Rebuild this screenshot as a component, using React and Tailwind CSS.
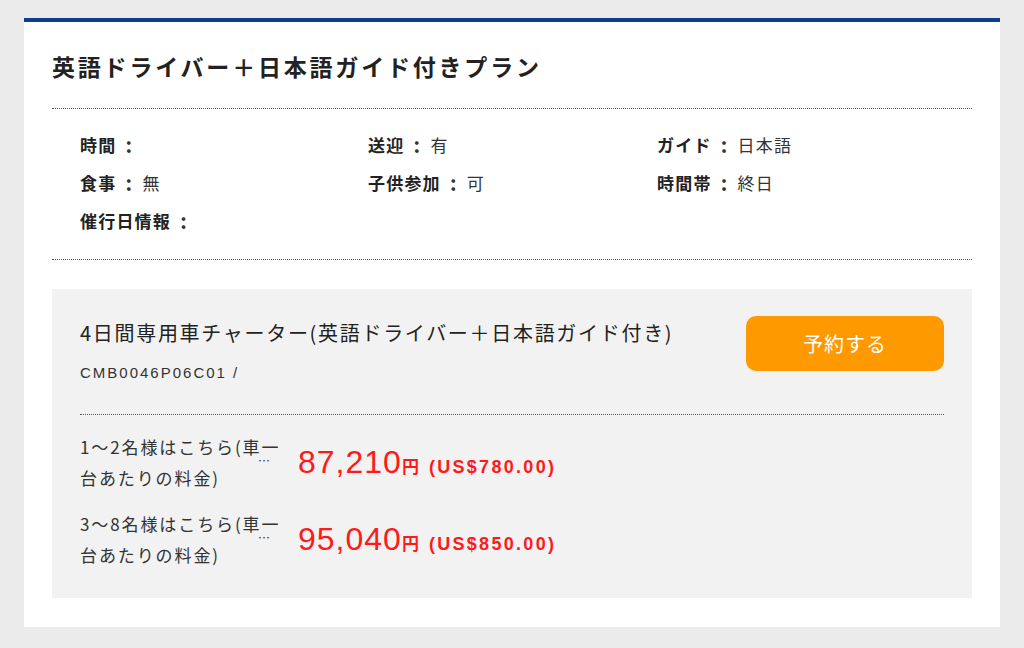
const Colon = () => <span className="inline-block w-[26px] text-center font-bold text-[20px] leading-[38px]">:</span>;

function Item({ label, value }) {
  return (
    <div className="flex items-center">
      <span className="font-bold text-[#222]">{label}</span>
      <Colon />
      {value && <span>{value}</span>}
    </div>
  );
}

export default function App() {
  const rows = [
    { label: "1〜2名様はこちら(車一", label2: "台あたりの料金)", price: "87,210", usd: "(US$780.00)" },
    { label: "3〜8名様はこちら(車一", label2: "台あたりの料金)", price: "95,040", usd: "(US$850.00)" },
  ];
  return (
    <div className="w-[1024px] h-[648px] bg-[#ebebeb] pt-[18px] pl-[24px] font-['Noto_Sans_CJK_JP',sans-serif] text-[#222]">
      <div className="w-[976px] h-[609px] bg-white border-t-[4px] border-[#0c3d8e] px-[28px]">
        <div className="pt-[28px] pb-[26px] border-b border-dotted border-[#555]">
          <h1 className="text-[23px] leading-[32px] font-bold tracking-[2.8px] text-[#222]">英語ドライバー＋日本語ガイド付きプラン</h1>
        </div>
        <div className="pt-[17px] pb-[19px] pl-[28px] border-b border-dotted border-[#555] grid grid-cols-[288px_289px_1fr] text-[17px] leading-[38px] tracking-[1.2px] text-[#333]">
          <Item label="時間" />
          <Item label="送迎" value="有" />
          <Item label="ガイド" value="日本語" />
          <Item label="食事" value="無" />
          <Item label="子供参加" value="可" />
          <Item label="時間帯" value="終日" />
          <Item label="催行日情報" />
        </div>
        <div className="mt-[29px] h-[309px] bg-[#f2f2f2] px-[28px] pt-[27px]">
          <div className="flex justify-between pb-[32px] border-b border-dotted border-[#555]">
            <div className="pt-[3px]">
              <div className="text-[20px] leading-[28px] tracking-[1.7px] text-[#222]">4日間専用車チャーター(英語ドライバー＋日本語ガイド付き)</div>
              <div className="mt-[17px] text-[15px] leading-[18px] tracking-[2px] text-[#333] font-['Liberation_Sans',sans-serif]">CMB0046P06C01 /</div>
            </div>
            <button className="w-[198px] h-[55px] rounded-[10px] bg-[#ff9900] text-white text-[20px] tracking-[1px]">予約する</button>
          </div>
          <div className="pt-[16px] flex flex-col gap-[15px]">
            {rows.map((r) => (
              <div key={r.price} className="flex items-center h-[62px]">
                <div className="w-[218px] flex flex-col text-[17px] leading-[17px] tracking-[1.9px] text-[#333]">
                  <div className="h-[17px]">{r.label}</div>
                  <div className="h-[14px] pl-[178px] text-[12px] leading-[12px] tracking-normal">…</div>
                  <div className="h-[17px]">{r.label2}</div>
                </div>
                <div className="flex items-baseline text-[#ff1a1a] font-['Liberation_Sans',sans-serif]">
                  <span className="text-[32px] leading-[40px] tracking-[1px]">{r.price}</span>
                  <span className="text-[17px] font-bold font-['Noto_Sans_CJK_JP',sans-serif]">円</span>
                  <span className="ml-[10px] text-[18px] font-bold tracking-[2.3px]">{r.usd}</span>
                </div>
              </div>
            ))}
          </div>
        </div>
      </div>
    </div>
  );
}
